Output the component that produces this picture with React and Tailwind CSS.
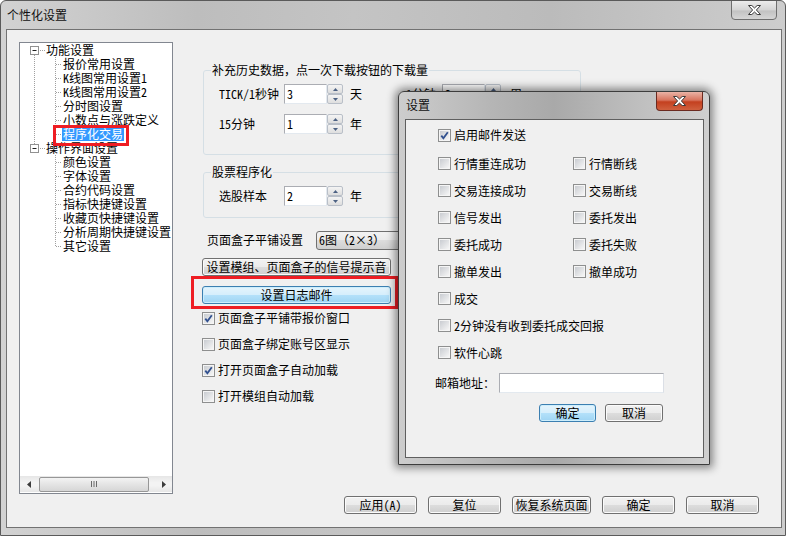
import React from "react";

const tree = [
  {
    label: "功能设置",
    children: ["报价常用设置", "K线图常用设置1", "K线图常用设置2", "分时图设置", "小数点与涨跌定义", "程序化交易"],
  },
  {
    label: "操作界面设置",
    children: ["颜色设置", "字体设置", "合约代码设置", "指标快捷键设置", "收藏页快捷键设置", "分析周期快捷键设置", "其它设置"],
  },
];

const mailPairs = [
  ["行情重连成功", "行情断线"],
  ["交易连接成功", "交易断线"],
  ["信号发出", "委托发出"],
  ["委托成功", "委托失败"],
  ["撤单发出", "撤单成功"],
  ["成交"],
  ["2分钟没有收到委托成交回报"],
  ["软件心跳"],
];

function CloseGlyph() {
  return (
    <svg width="13" height="10" viewBox="0 0 13 10">
      <polygon
        points="0.5,0.5 3.8,0.5 6.5,3 9.2,0.5 12.5,0.5 8.4,5 12.5,9.5 9.2,9.5 6.5,7 3.8,9.5 0.5,9.5 4.6,5"
        fill="#fff"
        stroke="#3a3a3a"
        strokeWidth="1"
      />
    </svg>
  );
}

function Check({ checked }) {
  return (
    <span className="flex h-[13px] w-[13px] shrink-0 items-center justify-center border border-[#8e8f8f] bg-[#f5f5f5]">
      <span className="flex h-[9px] w-[9px] items-center justify-center bg-[linear-gradient(135deg,#c9ccd1,#f6f6f6)]">
        {checked && (
          <svg width="9" height="9" viewBox="0 0 9 9">
            <path d="M1.3 4.6 L3.4 7.3 L7.8 1.2" fill="none" stroke="#31508f" strokeWidth="1.8" />
          </svg>
        )}
      </span>
    </span>
  );
}

function CheckRow({ label, checked }) {
  return (
    <div className="flex h-[14px] items-center gap-[3px] leading-[14px] whitespace-nowrap">
      <Check checked={checked} />
      <span>{label}</span>
    </div>
  );
}

function SpinBtn({ up }) {
  return (
    <div className="flex h-[10px] items-center justify-center rounded-[2px] border border-[#b9bfc8] bg-[linear-gradient(#f4f4f4,#dedede)]">
      <svg width="5" height="3" viewBox="0 0 5 3">
        {up ? <polygon points="0,3 2.5,0 5,3" fill="#4c6183" /> : <polygon points="0,0 2.5,3 5,0" fill="#4c6183" />}
      </svg>
    </div>
  );
}

function Spin({ value }) {
  return (
    <div className="flex h-[20px] w-[59px] shrink-0">
      <div className="flex-1 border border-[#abadb3] border-r-[#e3e9ef] border-b-[#e3e9ef] bg-white pl-[2px] leading-[18px]">
        {value}
      </div>
      <div className="flex w-[16px] flex-col">
        <SpinBtn up />
        <SpinBtn />
      </div>
    </div>
  );
}

function WinButton({ children, width, blue }) {
  return (
    <button
      className={
        blue
          ? "flex h-[18px] shrink-0 items-center justify-center rounded-[3px] border border-[#3c7fb1] bg-[linear-gradient(#e5f4fc_0%,#d5eefc_50%,#b4e1fa_50%,#9fd4f3_100%)] leading-[14px] text-black shadow-[inset_0_0_0_1px_#cdeefc]"
          : "flex h-[18px] shrink-0 items-center justify-center rounded-[3px] border border-[#707070] bg-[linear-gradient(#f2f2f2_0%,#ebebeb_50%,#dddddd_50%,#cfcfcf_100%)] leading-[14px] text-black shadow-[inset_0_0_0_1px_#fbfbfb]"
      }
      style={{ width }}
    >
      {children}
    </button>
  );
}

function TreeRoot({ label, first, last }) {
  return (
    <div className="flex h-[14px] items-center pl-[10px] leading-[14px]">
      <svg width="15" height="14" viewBox="0 0 15 14" className="shrink-0">
        {!first && <line x1="4.5" y1="0" x2="4.5" y2="3" stroke="#a0a0a0" strokeDasharray="1 1" />}
        {!last && <line x1="4.5" y1="12" x2="4.5" y2="14" stroke="#a0a0a0" strokeDasharray="1 1" />}
        <rect x="0.5" y="3.5" width="8" height="8" fill="#fff" stroke="#919191" />
        <line x1="2.5" y1="7.5" x2="6.5" y2="7.5" stroke="#1f1f1f" />
        <line x1="10" y1="7.5" x2="15" y2="7.5" stroke="#a0a0a0" strokeDasharray="1 1" />
      </svg>
      <span className="px-[1px]">{label}</span>
    </div>
  );
}

function TreeChild({ label, rootLast, childLast, selected }) {
  return (
    <div className="flex h-[14px] items-center pl-[10px] leading-[14px] whitespace-nowrap">
      <svg width="32" height="14" viewBox="0 0 32 14" className="shrink-0">
        {!rootLast && <line x1="4.5" y1="0" x2="4.5" y2="14" stroke="#a0a0a0" strokeDasharray="1 1" />}
        <line x1="25.5" y1="0" x2="25.5" y2={childLast ? 8 : 14} stroke="#a0a0a0" strokeDasharray="1 1" />
        <line x1="26" y1="7.5" x2="32" y2="7.5" stroke="#a0a0a0" strokeDasharray="1 1" />
      </svg>
      <span className={selected ? "bg-[#3399ff] px-[1px] text-white" : "px-[1px]"}>{label}</span>
    </div>
  );
}

function TreePanel() {
  return (
    <div className="relative ml-[12px] mt-[12px] flex h-[452px] w-[154px] shrink-0 flex-col border border-[#828790] bg-white">
      <div className="flex-1">
        {tree.map((node, i) => (
          <div key={node.label}>
            <TreeRoot label={node.label} first={i === 0} last={i === tree.length - 1} />
            {node.children.map((c, j) => (
              <TreeChild
                key={c}
                label={c}
                rootLast={i === tree.length - 1}
                childLast={j === node.children.length - 1}
                selected={c === "程序化交易"}
              />
            ))}
          </div>
        ))}
      </div>
      <div className="mb-[1px] flex h-[16px] items-center bg-[linear-gradient(#e6e6e6,#f3f3f3_40%,#f3f3f3_60%,#e6e6e6)]">
        <div className="flex w-[17px] items-center justify-center">
          <svg width="4" height="7" viewBox="0 0 4 7">
            <polygon points="4,0 0,3.5 4,7" fill="#3c3c3c" />
          </svg>
        </div>
        <div className="ml-[2px] flex h-[15px] w-[110px] items-center justify-center rounded-[2px] border border-[#979797] bg-[linear-gradient(#f3f3f3,#e4e4e4_50%,#d6d6d6)]">
          <svg width="8" height="6" viewBox="0 0 8 6">
            <line x1="1.5" y1="0" x2="1.5" y2="6" stroke="#6a6a6a" />
            <line x1="4" y1="0" x2="4" y2="6" stroke="#6a6a6a" />
            <line x1="6.5" y1="0" x2="6.5" y2="6" stroke="#6a6a6a" />
          </svg>
        </div>
        <div className="ml-auto flex w-[17px] items-center justify-center">
          <svg width="4" height="7" viewBox="0 0 4 7">
            <polygon points="0,0 4,3.5 0,7" fill="#3c3c3c" />
          </svg>
        </div>
      </div>
      {/* annotation box around the selected node */}
      <div className="absolute left-[33px] top-[82px] h-[21px] w-[76px] border-[3px] border-[#ee1d23]" />
    </div>
  );
}

function SettingsPanel() {
  return (
    <div className="ml-[29px] flex flex-1 flex-col pb-[13px] pt-[33px]">
      <fieldset className="ml-[1px] w-[378px] rounded-[3px] border border-[#d5dfe5]">
        <legend className="ml-[7px] px-[1px] leading-[14px]">补充历史数据，点一次下载按钮的下载量</legend>
        <div className="flex flex-col gap-[10px] pb-[20px] pl-[15px] pt-[7px]">
          <div className="flex h-[20px] items-center whitespace-nowrap">
            <span className="w-[65px]">TICK/1秒钟</span>
            <Spin value="3" />
            <span className="ml-[7px]">天</span>
            <span className="ml-[44px] w-[36px]">1分钟</span>
            <Spin value="3" />
            <span className="ml-[9px]">周</span>
          </div>
          <div className="flex h-[20px] items-center whitespace-nowrap">
            <span className="w-[65px]">15分钟</span>
            <Spin value="1" />
            <span className="ml-[7px]">年</span>
          </div>
        </div>
      </fieldset>

      <fieldset className="ml-[1px] mt-[10px] w-[378px] rounded-[3px] border border-[#d5dfe5]">
        <legend className="ml-[7px] px-[1px] leading-[14px]">股票程序化</legend>
        <div className="pb-[11px] pl-[15px] pt-[7px]">
          <div className="flex h-[20px] items-center whitespace-nowrap">
            <span className="w-[65px]">选股样本</span>
            <Spin value="2" />
            <span className="ml-[7px]">年</span>
          </div>
        </div>
      </fieldset>

      <div className="mt-[12px] flex h-[20px] items-center whitespace-nowrap pl-[5px]">
        <span className="w-[96px]">页面盒子平铺设置</span>
        <div className="ml-[13px] flex h-[19px] w-[110px] items-center rounded-[3px] border border-[#707070] bg-[linear-gradient(#f2f2f2_0%,#ebebeb_50%,#dddddd_50%,#cfcfcf_100%)] pl-[2px] leading-[14px]">
          6图（2×3）
        </div>
      </div>

      <div className="mt-[8px]">
        <WinButton width="189px">设置模组、页面盒子的信号提示音</WinButton>
      </div>

      <div className="-ml-[11px] w-[207px] border-[3px] border-[#ee1d23] pb-[2px] pl-[8px] pt-[7px]">
        <WinButton width="189px" blue>
          设置日志邮件
        </WinButton>
      </div>

      <div className="mt-[2px] flex flex-col gap-[12px]">
        <CheckRow label="页面盒子平铺带报价窗口" checked />
        <CheckRow label="页面盒子绑定账号区显示" />
        <CheckRow label="打开页面盒子自动加载" checked />
        <CheckRow label="打开模组自动加载" />
      </div>

      <div className="mt-auto flex justify-end gap-[11px] pr-[22px]">
        <WinButton width="73px">应用(A)</WinButton>
        <WinButton width="73px">复位</WinButton>
        <WinButton width="79px">恢复系统页面</WinButton>
        <WinButton width="73px">确定</WinButton>
        <WinButton width="73px">取消</WinButton>
      </div>
    </div>
  );
}

function MailDialog() {
  return (
    <div className="absolute left-[397px] top-[90px] flex h-[374px] w-[312px] flex-col rounded-t-[6px] border border-[#3d3d3d] bg-[linear-gradient(90deg,#cdcdcd,#b5b5b5_30%,#a9a9a9_50%,#bdbdbd_75%,#cfcfcf)] shadow-[0_0_9px_3px_rgba(0,0,0,0.45)]">
      <div className="flex h-[27px] shrink-0 justify-between pl-[7px] pr-[6px]">
        <span className="mt-[6px] leading-[14px] text-[#111]">设置</span>
        <div className="flex h-[19px] w-[47px] items-center justify-center rounded-b-[4px] border border-t-0 border-[#6b2a20] bg-[linear-gradient(#eab3a6,#d8745e_45%,#c4401f_55%,#d0603e)]">
          <CloseGlyph />
        </div>
      </div>
      <div className="ml-[6px] h-[339px] w-[299px] border border-[#5f5f5f] bg-[#f0f0f0] pl-[32px]">
        <div className="flex h-[30px] items-center">
          <CheckRow label="启用邮件发送" checked />
        </div>
        {mailPairs.map((pair) => (
          <div key={pair[0]} className="flex h-[27px] items-center">
            <div className="w-[135px] shrink-0">
              <CheckRow label={pair[0]} />
            </div>
            {pair[1] && <CheckRow label={pair[1]} />}
          </div>
        ))}
        <div className="-ml-[3px] mt-[7px] flex h-[20px] items-center gap-[4px]">
          <span className="w-[60px] whitespace-nowrap">邮箱地址：</span>
          <div className="h-[20px] w-[165px] border border-[#abadb3] border-r-[#dbdfe6] border-b-[#e3e9ef] bg-white" />
        </div>
        <div className="ml-[101px] mt-[11px] flex gap-[9px]">
          <WinButton width="57px" blue>
            确定
          </WinButton>
          <WinButton width="58px">取消</WinButton>
        </div>
      </div>
    </div>
  );
}

export default function App() {
  return (
    <div className="relative h-[536px] w-[786px] overflow-hidden rounded-t-[6px] border border-[#5a5a5a] bg-[linear-gradient(90deg,#d2d2d2,#bdbdbd_25%,#c4c4c4_45%,#bbbbbb_70%,#cdcdcd)] font-['Noto_Sans_Mono_CJK_SC','Noto_Sans_CJK_SC',sans-serif] text-[12px] text-black">
      <div className="flex h-[28px] justify-between pl-[6px] pr-[8px]">
        <span className="mt-[7px] leading-[14px] text-[#111]">个性化设置</span>
        <div className="-mt-[1px] flex h-[20px] w-[46px] items-center justify-center rounded-b-[4px] border border-[#6e6e6e] bg-[linear-gradient(#ececec,#d4d4d4_50%,#c2c2c2_55%,#d6d6d6)]">
          <CloseGlyph />
        </div>
      </div>
      <div className="ml-[5px] flex h-[499px] w-[776px] border border-[#727272] bg-[#f0f0f0]">
        <TreePanel />
        <SettingsPanel />
      </div>
      <MailDialog />
    </div>
  );
}
